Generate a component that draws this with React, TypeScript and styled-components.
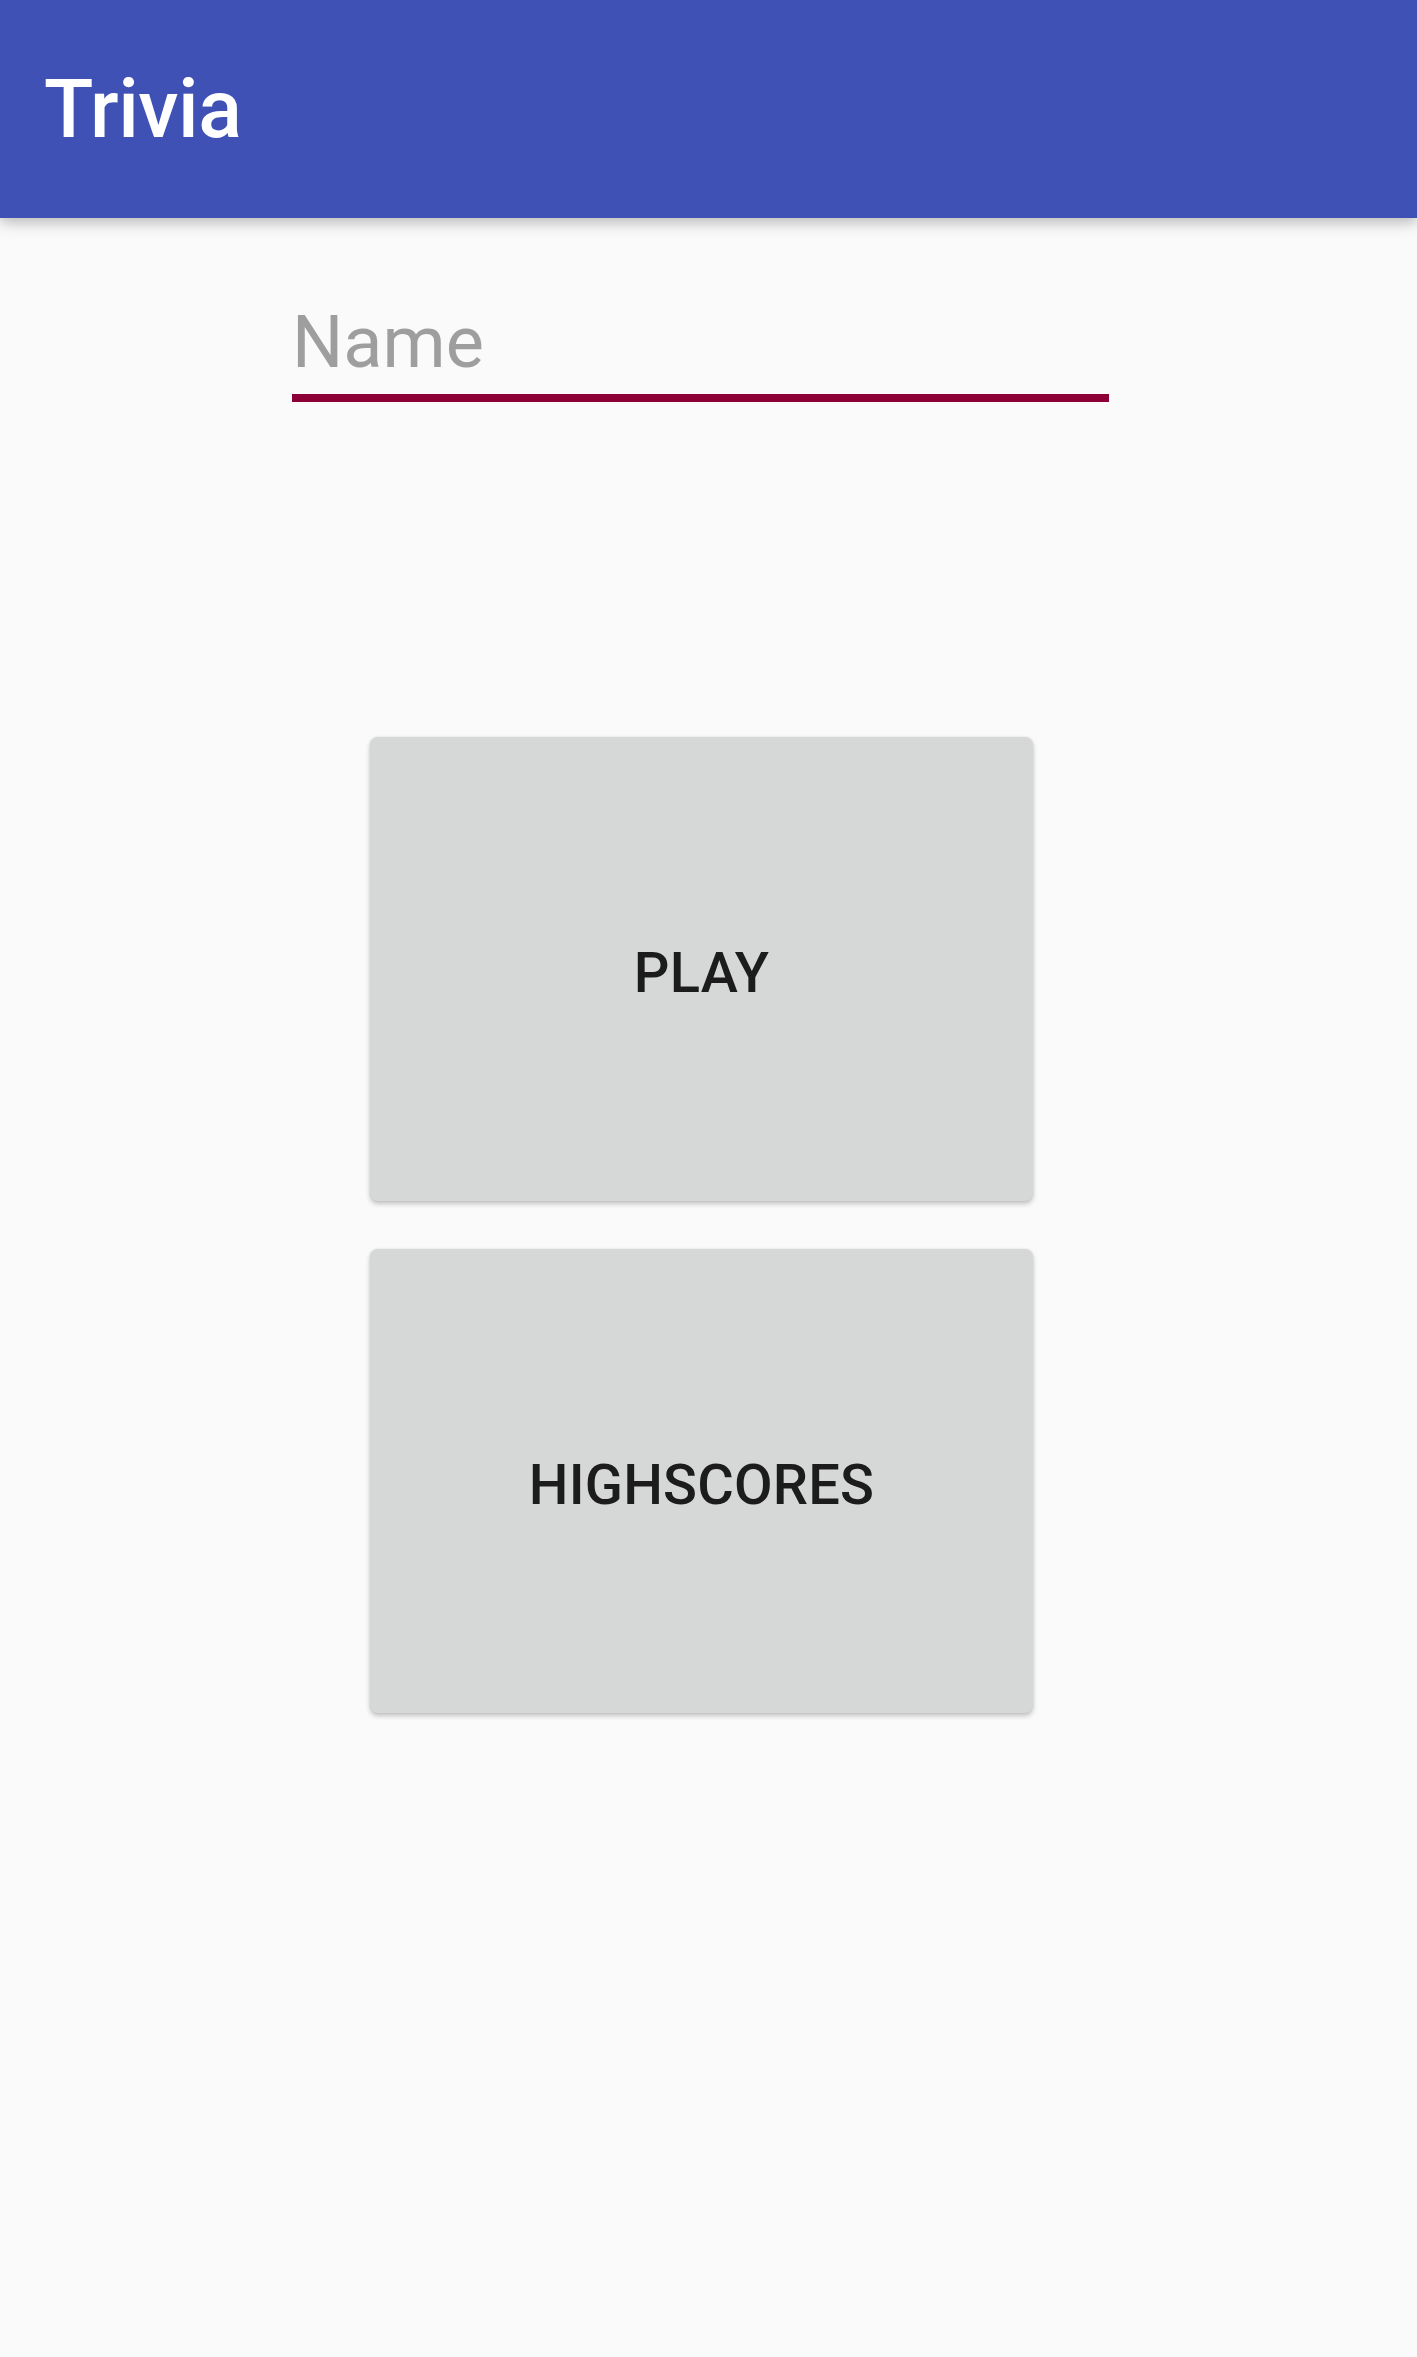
import styled, { createGlobalStyle } from "styled-components"

const GlobalStyle = createGlobalStyle`
html, body {
    margin: 0;
    padding: 0;
    background: #fafafa;
    font-family: Roboto, "Noto Sans", sans-serif;
}
`

const Screen = styled.div`
width: 100vw;
min-height: 100vh;
background: #fafafa;
display: flex;
flex-direction: column;
`

const AppBar = styled.header`
height: 218px;
background: #3f51b5;
display: flex;
align-items: center;
padding-left: 44px;
box-shadow: 0 4px 14px rgba(0, 0, 0, 0.28);
position: relative;
z-index: 1;

h1 {
    margin: 0;
    color: #ffffff;
    font-size: 81px;
    font-weight: 500;
    letter-spacing: -0.5px;
}
`

const Main = styled.main`
display: flex;
flex-direction: column;
`

const NameInput = styled.input`
box-sizing: border-box;
width: 817px;
margin: 88px 0 0 292px;
padding: 0 0 16px 0;
height: 96px;
border: none;
border-bottom: 8px solid #8d0037;
background: transparent;
outline: none;
font-family: Roboto, sans-serif;
font-size: 72px;
line-height: 72px;
color: #212121;

&::placeholder {
    color: #9e9e9e;
}
`

const Buttons = styled.div`
display: flex;
flex-direction: column;
gap: 48px;
margin: 335px 0 0 370px;
`

const BigButton = styled.button`
width: 663px;
height: 464px;
padding: 8px 0 0;
border: none;
border-radius: 8px;
background: #d6d7d7;
box-shadow: 0 3px 5px rgba(0, 0, 0, 0.22), 0 0 3px rgba(0, 0, 0, 0.08);
font-family: Roboto, sans-serif;
font-size: 56px;
font-weight: 500;
letter-spacing: 0.2px;
color: #1c1c1c;
text-transform: uppercase;
cursor: pointer;
`

export default function App() {

    const actions = ["Play", "Highscores"]

    return (
        <Screen>
            <GlobalStyle />
            <AppBar>
                <h1>Trivia</h1>
            </AppBar>
            <Main>
                <NameInput type="text" placeholder="Name" />
                <Buttons>
                    {actions.map((label) => <BigButton key={label}>{label}</BigButton>)}
                </Buttons>
            </Main>
        </Screen>
    )
}
